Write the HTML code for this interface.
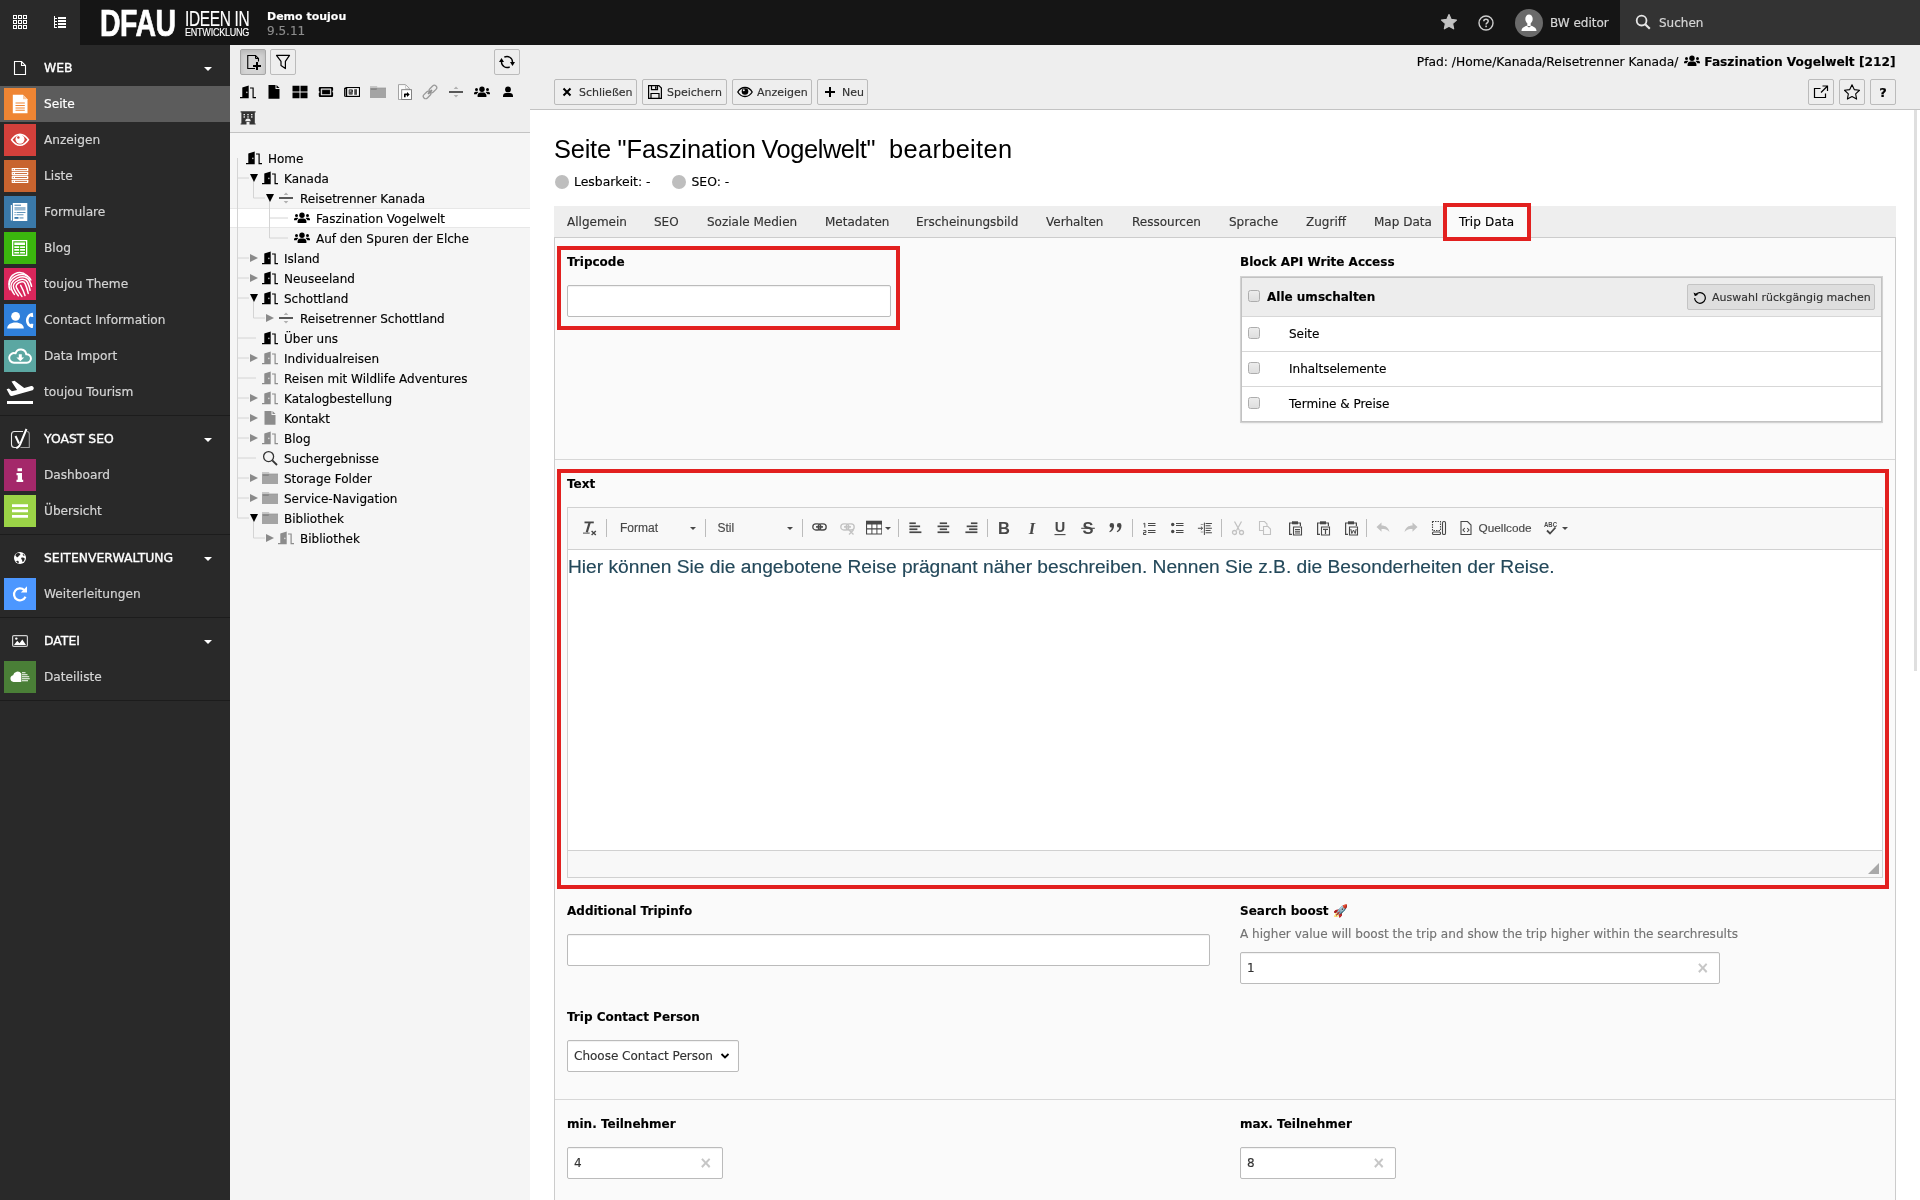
<!DOCTYPE html>
<html lang="de">
<head>
<meta charset="utf-8">
<title>Seite "Faszination Vogelwelt" bearbeiten</title>
<style>
*{box-sizing:border-box;margin:0;padding:0}
html,body{width:1920px;height:1200px;overflow:hidden;background:#fff}
body{font-family:"DejaVu Sans","Liberation Sans",sans-serif;font-size:12px;color:#000;position:relative}
svg{display:block}
.abs{position:absolute}
/* ---------- topbar ---------- */
#topbar{position:absolute;left:0;top:0;width:1920px;height:45px;background:#151515;color:#fff}
#topbar .left{position:absolute;left:0;top:0;width:80px;height:45px;background:#292929}
#topbar .search{position:absolute;left:1620px;top:0;width:300px;height:45px;background:#333}
.logo{position:absolute;left:100px;top:0;height:45px;color:#fff;font-family:"Liberation Sans",sans-serif;white-space:nowrap}
.logo span{position:absolute;transform-origin:0 0;line-height:1;display:block}
.sitename{position:absolute;left:267px;top:10px;font-size:11px;font-weight:bold;color:#fff;line-height:14px;white-space:nowrap}
.sitever{position:absolute;left:267px;top:24px;font-size:12px;color:#8c8c8c;line-height:14px;white-space:nowrap}
.tb-text{-webkit-text-stroke:.2px;position:absolute;top:1px;height:45px;line-height:45px;font-size:12px;color:#d6d6d6;white-space:nowrap}
/* ---------- module menu ---------- */
#modmenu{position:absolute;left:0;top:45px;width:230px;height:1155px;background:#292929;color:#fff}
.grp{padding:5px 0;border-bottom:1px solid #1c1c1c}
.grp .hd{-webkit-text-stroke:.35px #fff;height:36px;position:relative;line-height:36px;font-size:12.4px;color:#fff;padding-left:44px;white-space:nowrap}
.grp .hd .ic{position:absolute;left:12px;top:10px;width:16px;height:16px}
.grp .hd .car{position:absolute;left:204px;top:17px;width:0;height:0;border-left:4px solid transparent;border-right:4px solid transparent;border-top:4px solid #fff}
.mi{-webkit-text-stroke:.2px;height:36px;position:relative;line-height:36px;font-size:12.15px;color:#d4d4d4;padding-left:44px;white-space:nowrap}
.mi.act{background:#5c5c5c;color:#fff}
.mi .ib{position:absolute;left:4px;top:2px;width:32px;height:32px}
.mi .ib svg{position:absolute}
/* ---------- page tree ---------- */
#tree{position:absolute;left:230px;top:45px;width:300px;height:1155px;background:#f5f5f5}
#treebar{position:absolute;left:0;top:0;width:300px;height:88px;background:#eee;border-bottom:1px solid #c3c3c3}
.btn{position:absolute;height:26px;border:1px solid #bbb;border-radius:2px;background:#eee;font-size:11px;color:#333;line-height:26px;white-space:nowrap}
.btn.on{background:#d4d4d4;border-color:#a6a6a6;box-shadow:inset 0 3px 5px rgba(0,0,0,.125)}
.btn svg{position:absolute;left:4px;top:4px;width:16px;height:16px}
.tbi{position:absolute;width:16px;height:16px}
.tn{position:absolute;left:0;width:300px;height:20px;line-height:20px;font-size:12px;color:#000;white-space:nowrap}
.tn.sel{background:#fff;border-top:1px solid #e7e7e7;border-bottom:1px solid #e7e7e7;line-height:18px}
.tn .lb{position:absolute;top:1px}
.tn svg.i{position:absolute;top:2px;width:16px;height:16px}
.tn.sel svg.i{top:1px}
.tg{position:absolute;top:6px;width:0;height:0}
.tg.o{border-left:4.5px solid transparent;border-right:4.5px solid transparent;border-top:8px solid #000;margin-left:-4.5px}
.tg.c{border-top:4.5px solid transparent;border-bottom:4.5px solid transparent;border-left:8px solid #8a8a8a;margin-left:-4px;top:5.5px}
/* ---------- content ---------- */
#content{position:absolute;left:530px;top:45px;width:1390px;height:1155px;background:#fff}
#dochead{position:absolute;left:0;top:0;width:1390px;height:65px;background:#eee;border-bottom:1px solid #c3c3c3}
.path{position:absolute;right:24.5px;top:8px;height:18px;line-height:18px;font-size:12.27px;white-space:nowrap}
h1{-webkit-text-stroke:0;position:absolute;left:24px;top:86px;font-family:"Liberation Sans",sans-serif;font-weight:normal;font-size:25.4px;line-height:36px;white-space:nowrap;color:#000}
.yo{position:absolute;top:130px;height:14px;line-height:14px;font-size:12.4px;white-space:nowrap}
.yo i{position:absolute;left:-20px;top:0;width:14px;height:14px;border-radius:50%;background:#bebebe}
#tabs{position:absolute;left:24px;top:161px;width:1342px;height:32px;background:#eee;border-bottom:1px solid #ccc}
#tabs span{position:absolute;top:0;height:31px;line-height:33px;font-size:12px;color:#333;white-space:nowrap}
#panel{position:absolute;left:24px;top:192px;width:1342px;height:1000px;background:#fafafa;border:1px solid #ccc;border-bottom:0}
.red{position:absolute;border:4px solid #e2201f}
.lbl{position:absolute;font-weight:bold;font-size:12px;line-height:16px;white-space:nowrap;color:#000}
.inp{position:absolute;height:32px;background:#fff;border:1px solid #bbb;border-radius:2px;font-size:12px;line-height:30px;padding-left:6px;color:#333;box-shadow:inset 0 1px 1px rgba(0,0,0,.06)}
.inp .x{position:absolute;right:10px;top:1px;color:#c6c6c6;font-size:15px;line-height:29px;font-weight:bold}
.hr{position:absolute;left:0;width:1340px;height:1px;background:#d7d7d7}
/* checkbox box */
#cbx{position:absolute;left:686px;top:39px;width:641px;height:145px;border:1px solid #c2c2c2;background:#fff;box-shadow:0 0 0 1px #d2d2d2,0 1px 2px rgba(0,0,0,.12)}
#cbx .row{position:absolute;left:0;width:639px;height:35px;border-top:1px solid #d7d7d7;line-height:34px;font-size:12px;padding-left:47px;color:#000}
#cbx .h{position:absolute;left:0;top:0;width:639px;height:38px;background:#ededed;line-height:38px;font-weight:bold;padding-left:25px}
.cb{position:absolute;left:6px;width:12px;height:12px;border:1px solid #adadad;border-radius:2.5px;background:linear-gradient(#ececec,#dedede)}
/* cke */
#cke{position:absolute;left:12px;top:269px;width:1316px;height:371px;border:1px solid #d1d1d1;background:#fff}
#cke .top{position:absolute;left:0;top:0;width:1314px;height:42px;background:#f8f8f8;border-bottom:1px solid #d1d1d1}
#cke .bot{position:absolute;left:0;bottom:0;width:1314px;height:27px;background:#f8f8f8;border-top:1px solid #d1d1d1}
#cke .txt{position:absolute;left:0px;top:46px;font-family:"Liberation Sans",sans-serif;font-size:19.2px;line-height:26px;color:#23485a;white-space:nowrap}
.ck{position:absolute;top:12px;width:16px;height:16px}
.ck.dis{opacity:.3}
.cks{position:absolute;top:11px;width:1px;height:18px;background:#bcbcbc}
.ckt{position:absolute;top:10px;height:20px;line-height:20px;font-family:"Liberation Sans",sans-serif;font-size:12px;color:#484848;white-space:nowrap}
.ckar{position:absolute;top:19px;width:0;height:0;border-left:3px solid transparent;border-right:3px solid transparent;border-top:3px solid #484848}
#topbar,#modmenu,#tree,#content{-webkit-text-stroke:.15px;will-change:transform}
</style>
</head>
<body>
<div id="topbar"><div class="left">
<svg class="abs" style="left:13px;top:15px" width="14" height="14" viewBox="0 0 14 14" fill="none" stroke="#fff" stroke-width="1"><rect x="0.5" y="0.5" width="3" height="3"/><rect x="5.5" y="0.5" width="3" height="3"/><rect x="10.5" y="0.5" width="3" height="3"/><rect x="0.5" y="5.5" width="3" height="3"/><rect x="5.5" y="5.5" width="3" height="3"/><rect x="10.5" y="5.5" width="3" height="3"/><rect x="0.5" y="10.5" width="3" height="3"/><rect x="5.5" y="10.5" width="3" height="3"/><rect x="10.5" y="10.5" width="3" height="3"/></svg>
<svg class="abs" style="left:53px;top:15px" width="14" height="14" viewBox="0 0 14 14" fill="#fff"><path d="M5 2h8v2H5zM5 5h8v2H5zM5 8h8v2H5zM5 11h8v2H5z"/><path d="M1 1h1v12H1zM2 3h2v1H2zM2 6h2v1H2zM2 9h2v1H2zM2 12h2v1H2z"/></svg>
</div>
<div class="logo"><span style="left:0;top:6px;font-size:36px;font-weight:bold;transform:scaleX(.79);letter-spacing:-.6px;-webkit-text-stroke:.7px #fff">DFAU</span><span style="left:85px;top:8.5px;font-size:21.5px;transform:scaleX(.72);letter-spacing:-.5px">IDEEN IN</span><span style="left:85px;top:27px;font-size:11.5px;transform:scaleX(.785);letter-spacing:-.3px">ENTWICKLUNG</span></div>
<div class="sitename">Demo toujou</div><div class="sitever">9.5.11</div>
<svg class="abs" style="left:1440px;top:13px" width="18" height="18" viewBox="0 0 18 18"><path fill="#c2c2c2" stroke="#c2c2c2" stroke-width="1.200" stroke-linejoin="round" d="M9 1.500l2.200 4.900 5.300.6-3.900 3.600 1.050 5.200L9 13.200l-4.650 2.600L5.400 10.600 1.500 7l5.300-.6z"/></svg>
<svg class="abs" style="left:1478px;top:15px" width="16" height="16" viewBox="0 0 16 16"><circle cx="8" cy="8" r="7" fill="none" stroke="#cdcdcd" stroke-width="1.4"/><path fill="none" stroke="#cdcdcd" stroke-width="1.5" d="M5.8 6.3c0-1.3 1-2.1 2.2-2.1s2.2.8 2.2 2c0 1.6-2.1 1.6-2.1 3.3"/><rect x="7.3" y="10.6" width="1.6" height="1.6" fill="#cdcdcd"/></svg>
<svg class="abs" style="left:1515px;top:9px" width="28" height="28" viewBox="0 0 28 28"><defs><clipPath id="avc"><circle cx="14" cy="14" r="14"/></clipPath></defs><circle cx="14" cy="14" r="14" fill="#6a6a6a"/><g clip-path="url(#avc)" fill="#fff"><ellipse cx="14" cy="10" rx="3.700" ry="4.600"/><rect x="12.300" y="13" width="3.400" height="4"/><path d="M6.5 22c0-3.2 3-4.4 5.2-5.2l2.3 1.6 2.3-1.6c2.2.8 5.2 2 5.2 5.2z"/></g></svg>
<div class="tb-text" style="left:1550px">BW editor</div>
<div class="search"></div>
<svg class="abs" style="left:1635px;top:14px" width="16" height="16" viewBox="0 0 16 16" fill="none" stroke="#e6e6e6" stroke-width="1.8"><circle cx="6.6" cy="6.6" r="4.9"/><path d="M10.2 10.2l4.6 4.6" stroke-width="2.2"/></svg>
<div class="tb-text" style="left:1659px">Suchen</div>
</div>
<div id="modmenu">
<div class="grp"><div class="hd"><svg class="ic" viewBox="0 0 16 16" fill="none" stroke="#fff" stroke-width="1.100"><path d="M2.500 1.500h7l4 4v9h-11z"/><path d="M9.500 1.500v4h4"/></svg>WEB<span class="car"></span></div>
<div class="mi act"><span class="ib" style="background:#ef8533"><svg viewBox="0 0 32 32" style="left:0;top:0;width:32px;height:32px" ><path fill="#fff" d="M8.800 6.800h10.200l4.500 4.500v14H8.800z"/><path fill="#f9c9a3" d="M19 6.800l4.500 4.500H19z"/><path fill="#ef8533" d="M11.500 14.600h9.300v1h-9.300zM11.500 17h9.300v1h-9.300zM11.500 19.400h9.300v1h-9.300zM11.500 21.800h9.300v1h-9.300z"/></svg></span>Seite</div>
<div class="mi"><span class="ib" style="background:#d3403b"><svg viewBox="0 0 32 32" style="left:0;top:0;width:32px;height:32px" ><path fill="#fff" d="M6.600 15.800C9.500 11.500 12.500 9.500 16 9.500S22.500 11.500 25.400 15.800C22.500 20 19.500 22.100 16 22.100S9.500 20 6.600 15.800z"/><path fill="#d3403b" d="M8.600 15.800C11 12.500 13.300 11 16 11s5 1.500 7.400 4.800C21 19 18.700 20.600 16 20.600S11 19 8.600 15.800z"/><circle cx="16" cy="15.300" r="4.500" fill="#fff"/><circle cx="14.400" cy="13.500" r="1.200" fill="#d3403b"/></svg></span>Anzeigen</div>
<div class="mi"><span class="ib" style="background:#c8642f"><svg viewBox="0 0 32 32" style="left:0;top:0;width:32px;height:32px" ><g fill="#fff"><rect x="7.700" y="8.0" width="16.600" height="3.300" rx=".6"/><rect x="7.700" y="11.9" width="16.600" height="3.300" rx=".6"/><rect x="7.700" y="15.8" width="16.600" height="3.300" rx=".6"/><rect x="7.700" y="19.7" width="16.600" height="3.300" rx=".6"/></g><g fill="#c8642f"><rect x="11" y="9.2" width="12" height=".9"/><rect x="8.800" y="9.2" width="1" height=".9"/><rect x="11" y="13.1" width="12" height=".9"/><rect x="8.800" y="13.1" width="1" height=".9"/><rect x="11" y="17.0" width="12" height=".9"/><rect x="8.800" y="17.0" width="1" height=".9"/><rect x="11" y="20.9" width="12" height=".9"/><rect x="8.800" y="20.9" width="1" height=".9"/></g></svg></span>Liste</div>
<div class="mi"><span class="ib" style="background:#3a79a9"><svg viewBox="0 0 32 32" style="left:0;top:0;width:32px;height:32px" ><path fill="#fff" d="M6.800 9h1.200v15.500H6.800z" opacity=".95"/><path fill="#fff" d="M8.800 7h14.500v18H8.800z"/><path fill="#3a79a9" d="M10.500 8.700h6.500v1h-6.500z"/><path fill="#3a79a9" opacity=".5" d="M10.500 11h11v3.500h-11z"/><path fill="#3a79a9" opacity=".8" d="M10.500 16h1.200v1h-1.200zM12.500 16h9v1h-9zM10.500 18.300h1.200v1h-1.200zM12.500 18.300h7v1h-7z"/><path fill="#3a79a9" d="M10.500 21h4v1.800h-4z"/><path fill="#3a79a9" opacity=".5" d="M15.500 21h4v1.800h-4z"/></svg></span>Formulare</div>
<div class="mi"><span class="ib" style="background:#3bb60e"><svg viewBox="0 0 32 32" style="left:0;top:0;width:32px;height:32px" ><path fill="#fff" fill-rule="evenodd" d="M8 8h15.300v16H8zm1.300 1.300v13.400H22V9.300z"/><path fill="#fff" d="M10.300 10.500h10.700v2.500H10.300zM10.300 14.300h4.900v1.700h-4.900zM10.300 17.100h4.900v1.700h-4.900zM10.300 19.900h4.900v1.700h-4.900zM16.100 14.300H21v1.700h-4.900zM16.100 17.100H21v1.700h-4.900zM16.100 19.900H21v1.700h-4.900z"/></svg></span>Blog</div>
<div class="mi"><span class="ib" style="background:#d9265b"><svg viewBox="0 0 32 32" style="left:0;top:0;width:32px;height:32px" fill="none" stroke="#fff" stroke-width="1.500" stroke-linecap="round"><g transform="rotate(-25 16 16)"><path d="M6 11.500C8 7 11.500 4.500 16 4.500s8 2.500 10 7"/><path d="M4.500 17c0-6 5-10 11.500-10s11.500 4 11.500 10"/><path d="M6.500 23c-.5-2-.5-3.500-.5-5.500 0-5 4.500-8 10-8s10 3 10 8c0 2 0 3.500-.5 5.500"/><path d="M9.500 26c-.8-3-1-5-1-8.500 0-3.500 3.300-5.500 7.500-5.500s7.500 2 7.500 5.500c0 3.500-.2 5.500-1 8.500"/><path d="M12.500 28c-.8-3.500-1.300-6.500-1.300-10.200 0-2.200 2-3.500 4.800-3.500s4.800 1.300 4.800 3.500c0 3.700-.5 6.700-1.300 10.200"/><path d="M16 17.500c.3 4 .2 7.500-.3 11"/></g></svg></span>toujou Theme</div>
<div class="mi"><span class="ib" style="background:#2f80db"><svg viewBox="0 0 32 32" style="left:0;top:0;width:32px;height:32px" fill="#fff"><circle cx="11.600" cy="12.300" r="4.400"/><path d="M3.200 24.400c0-3.600 3.600-5.800 8.300-5.800s8.300 2.200 8.300 5.800z"/><path d="M28.800 8.700C24.800 9.200 22 12.400 22 16.400C22 20.400 24.800 23.600 28.800 24.100L29.300 19.900C28 19.600 26.900 19.700 26.200 20.200C25.200 19.200 24.600 17.900 24.600 16.400C24.600 14.900 25.200 13.600 26.200 12.600C26.900 13.100 28 13.200 29.300 12.900z"/></svg></span>Contact Information</div>
<div class="mi"><span class="ib" style="background:#5ba7a2"><svg viewBox="0 0 32 32" style="left:0;top:0;width:32px;height:32px" ><path d="M10 22.700H22.800A4.200 4.200 0 1 0 22.270 14.330A5.500 5.500 0 0 0 11.520 13.350A4.800 4.800 0 1 0 10 22.700z" fill="none" stroke="#fff" stroke-width="2" stroke-linejoin="round"/><path fill="#fff" d="M14.800 14.200h3v3.300h2.400l-3.900 3.800-3.900-3.800h2.400z"/></svg></span>Data Import</div>
<div class="mi"><span class="ib" style="background:transparent"><svg viewBox="0 0 32 32" style="left:0;top:0;width:32px;height:32px" fill="#fff"><path d="M3 25h26v3H3z"/><path d="M2.600 13.200l2.300-.6 3 2.700 5.200-1.400L7.500 5.600l3-.8 9.700 7.100 6.200-1.700c1.500-.4 3 .3 3.300 1.500.3 1.200-.6 2.500-2.100 2.900L8 19.900c-.8.200-1.600-.1-2.100-.7z"/></svg></span>toujou Tourism</div>
</div>
<div class="grp"><div class="hd"><svg class="ic" viewBox="0 0 20 22" fill="none" stroke="#fff" style="left:10px;top:7px;width:20px;height:22px"><path d="M13 3.500H4.500a3 3 0 0 0-3 3v10a3 3 0 0 0 3 3h2" stroke-width="1.100" opacity=".9"/><path d="M17 3.500c1.500 0 2.300 1 2.300 2.500v13.500h-8.800" stroke-width="1.100" opacity=".55"/><path d="M5.500 8l3.500 7.500" stroke-width="2"/><path d="M16.500 1L10 16.500c-.7 1.800-1.800 3.200-3.800 3.500" stroke-width="2"/></svg>YOAST SEO<span class="car"></span></div>
<div class="mi"><span class="ib" style="background:#a4286a"><svg viewBox="0 0 32 32" style="left:0;top:0;width:32px;height:32px" ><path fill="#fff" d="M13.500 9.200h4.500v3h-4.500zM12.500 14h5.500v6.800h1.200v2.200h-6.700v-2.200h1.200v-4.600h-1.200z"/></svg></span>Dashboard</div>
<div class="mi"><span class="ib" style="background:#9bd347"><svg viewBox="0 0 32 32" style="left:0;top:0;width:32px;height:32px" ><path fill="#fff" d="M8 9.200h16V12H8zM8 14.500h16v2.800H8zM8 19.900h16v2.800H8z"/></svg></span>Übersicht</div>
</div>
<div class="grp"><div class="hd"><svg class="ic" viewBox="0 0 16 16" style="left:12px;top:10px"><circle cx="8" cy="8" r="6" fill="#fff"/><path fill="#292929" d="M5.200 3.300c1-.4 2.500-.2 3 .5.500.8-.5 1.500-1.200 2-.8.500-.6 1.500-1.500 1.500s-1-.8-1.600-1.300c-.4-.4-.5-.9-.3-1.300.3-.6.900-1.100 1.600-1.400zM9.800 7.600c.9-.3 2.200 0 2.800.6.200 1.500-.6 3-1.800 3.900-.6-.4-.7-1.200-.6-1.900 0-.7-.9-.9-1-1.500-.1-.5.100-.9.600-1.100zM11 3.700c.8.500 1.400 1.300 1.700 2.100-.6.100-1.300-.1-1.700-.6-.3-.5-.3-1.100 0-1.500zM5.500 10.800c.6 0 1.200.5 1.300 1.100.1.500-.1 1-.5 1.300-.9-.3-1.700-.9-2.200-1.700.3-.4.800-.7 1.400-.7z"/></svg>SEITENVERWALTUNG<span class="car"></span></div>
<div class="mi"><span class="ib" style="background:#4c97ff"><svg viewBox="0 0 32 32" style="left:0;top:0;width:32px;height:32px" ><path d="M21.500 18.800a6 6 0 1 1-1.300-6.800" fill="none" stroke="#fff" stroke-width="2.200"/><path d="M23 8.300v6.200h-6.200z" fill="#fff"/></svg></span>Weiterleitungen</div>
</div>
<div class="grp"><div class="hd"><svg class="ic" viewBox="0 0 16 16"><rect x=".6" y="2.600" width="14.800" height="10.800" rx="1.200" fill="none" stroke="#cfcfcf" stroke-width="1.200"/><path fill="#fff" d="M2 12l3.200-4.200 2.300 2.400 2.800-3.700 3.700 5.500z"/><circle cx="4.300" cy="5.600" r="1.200" fill="#fff"/></svg>DATEI<span class="car"></span></div>
<div class="mi"><span class="ib" style="background:#4a7f37"><svg viewBox="0 0 32 32" style="left:0;top:0;width:32px;height:32px" fill="#fff"><path d="M9.500 21a3.400 3.400 0 0 1-.4-6.700 4.600 4.600 0 0 1 8.200-1.800V21z"/><path d="M18 11.300h3.500v1H18zM18 13.300h5.500v1H18zM18 15.300h7.200v1H18zM18 17.300h7.700v1H18zM18 19.300h6v1h-6z"/></svg></span>Dateiliste</div>
</div>
</div>
<div id="tree">
<div id="treebar">
<span class="btn on" style="left:10px;top:4px;width:26px"><svg viewBox="0 0 16 16" fill="none" stroke="#000" stroke-width="1.100"><path d="M13.500 7.500V4.500l-3-3H2.750v13H10"/><path d="M10.500 1.500v3h3" stroke-width="1"/><path d="M12 8v8M8 12h8" stroke-width="2"/></svg></span>
<span class="btn" style="left:40px;top:4px;width:26px"><svg viewBox="0 0 16 16" fill="none" stroke="#000" stroke-width="1.200" stroke-linejoin="round"><path d="M1.500 1.400h13L10.400 7.300v7.300L6 11.600V7.300z"/></svg></span>
<span class="btn" style="left:264px;top:4px;width:26px"><svg viewBox="0 0 16 16" fill="none" stroke="#000" stroke-width="1.400"><path d="M5.300 3.200A5.500 5.500 0 0 1 13.500 8M10.700 12.800A5.500 5.500 0 0 1 2.500 8"/><path fill="#000" stroke="none" d="M11 8h5l-2.500 4zM0 8h5L2.500 4z"/></svg></span>
<svg class="tbi" style="left:10px;top:39px" width="16" height="16" viewBox="0 0 16 16"><path fill="#000" d="M2.300 3.500L8.700 1.500V14.300H0V13H2.300z"/><path fill="#000" d="M10 3.400h3.700V13H16v1.300h-3.500V4.600H10z"/><rect x="6.300" y="7.700" width="1.100" height="1.400" fill="#eee"/></svg>
<svg class="tbi" style="left:36px;top:39px" width="16" height="16" viewBox="0 0 16 16"><path fill="#000" d="M2.500 1H9.500V5H13.500V14.800H2.500z"/><path fill="#000" d="M10.500 1L13.500 4H10.500z"/></svg>
<svg class="tbi" style="left:62px;top:39px" width="16" height="16" viewBox="0 0 16 16"><path fill="#000" d="M.5 1.700h7v5.800h-7zM8.500 1.700h7v5.800h-7zM.5 8.500h7v5.700h-7zM8.500 8.500h7v5.700h-7z"/></svg>
<svg class="tbi" style="left:88px;top:39px" width="16" height="16" viewBox="0 0 16 16"><path fill="#000" fill-rule="evenodd" d="M2 2.900h11.900a1.200 1.200 0 0 1 1.200 1.200v2.300a1 1 0 0 0-.7 1a1 1 0 0 0 .7 1v3.400a1.200 1.200 0 0 1-1.200 1.200H2a1.200 1.200 0 0 1-1.200-1.200V8.900a1 1 0 0 0 .7-1a1 1 0 0 0-.7-1V4.100a1.200 1.200 0 0 1 1.200-1.200zM3.300 4.400a.5.500 0 0 0-.5.500v5.900a.5.500 0 0 0 .5.500h9.400a.5.500 0 0 0 .5-.5V4.900a.5.500 0 0 0-.5-.5z"/><rect x="3.700" y="5.300" width="8.600" height="5.100" fill="#8a8a8a"/><rect x="4.200" y="6.100" width="7.700" height="4" fill="#000"/></svg>
<svg class="tbi" style="left:114px;top:39px" width="16" height="16" viewBox="0 0 16 16"><path fill="#000" d="M2.300 2.900H16v10.200H2.300L.1 12.500V4.100z"/><path fill="#fff" d="M3.200 4.100h11.700v7.700H3.200z"/><path fill="#9a9a9a" d="M1.100 5h.8v7h-.8z"/><rect x="4.600" y="5.200" width="4.200" height="5.600" rx=".8" fill="#555"/><circle cx="6.700" cy="7" r="1" fill="#9c9c9c"/><circle cx="8.200" cy="7" r=".7" fill="#000"/><rect x="10.200" y="5.200" width="2.800" height="5.600" fill="#4a4a4a"/></svg>
<svg class="tbi" style="left:140px;top:39px" width="16" height="16" viewBox="0 0 16 16"><path fill="#a4a4a4" d="M0 3.800h16V14H0z"/><path fill="#b9b9b9" d="M0 2.300h7l.8 1.500H0z"/><path fill="#878787" d="M.8 4.200h6.500l-.8 1.800H.8z"/><path fill="#9a9a9a" d="M7.800 3.800H16v.8H7.400z"/></svg>
<svg class="tbi" style="left:166px;top:39px" width="16" height="16" viewBox="0 0 16 16"><path fill="#fbfbfb" stroke="#9a9a9a" stroke-width=".9" d="M2.500.6h7l4 4v11H2.500z"/><path fill="none" stroke="#c4c4c4" stroke-width=".8" d="M9.500.6v4h4"/><rect x="5.700" y="5.700" width="9.800" height="9.800" fill="#fff" stroke="#777" stroke-width=".9"/><path fill="#000" d="M8 13.200V10.600c0-.6.400-1 1-1h2V8l2.700 2.500L11 13v-1.700H9.600v1.900z"/></svg>
<svg class="tbi" style="left:192px;top:39px" width="16" height="16" viewBox="0 0 16 16"><g transform="rotate(-45 8 8)" fill="none" stroke="#9a9a9a" stroke-width="1.300"><rect x="-.5" y="5.600" width="8.600" height="4.800" rx="2.400"/><rect x="7.900" y="5.600" width="8.600" height="4.800" rx="2.400"/></g><g transform="rotate(-45 8 8)"><rect x="5" y="7" width="6" height="2" rx="1" fill="#8f8f8f"/></g></svg>
<svg class="tbi" style="left:218px;top:39px" width="16" height="16" viewBox="0 0 16 16"><rect x="1" y="7" width="14" height="2" fill="#585858"/><path fill="#b0b0b0" d="M5.700 4.900h4.600L8 2.400zM5.700 11.100h4.600L8 13.600z"/></svg>
<svg class="tbi" style="left:244px;top:39px" width="16" height="16" viewBox="0 0 16 16"><circle cx="8" cy="5.200" r="2.700" fill="#000"/><path fill="#000" d="M3.600 13.100v-1.600c0-1.700 1.300-2.900 3-2.900h2.800c1.700 0 3 1.200 3 2.900v1.600z"/><circle cx="2.500" cy="5.600" r="1.500" fill="#000"/><circle cx="13.500" cy="5.600" r="1.500" fill="#000"/><path fill="#000" d="M0 10.300V9.500c0-1 .8-1.700 1.700-1.700h1.600c.4 0 .8.100 1.100.4-1 .6-1.600 1.300-1.800 2.100zM16 10.300V9.500c0-1-.8-1.700-1.700-1.700h-1.600c-.4 0-.8.100-1.100.4 1 .6 1.600 1.300 1.800 2.100z"/></svg>
<svg class="tbi" style="left:270px;top:39px" width="16" height="16" viewBox="0 0 16 16"><circle cx="8" cy="5.400" r="2.900" fill="#000"/><path fill="#000" d="M3 13.100v-1.300c0-1.700 1.300-2.900 3-2.900h4c1.700 0 3 1.200 3 2.900v1.300z"/></svg>
<svg class="tbi" style="left:10px;top:65px" width="16" height="16" viewBox="0 0 16 16"><path fill="#333" d="M.6 1.300h15v1.200h-.8v10.900h.8v1.200H9.500V12h-3v2.600H.6v-1.200h.8V2.500H.6z"/><g fill="#eee"><rect x="3.500" y="4" width="1.500" height="1.300"/><rect x="7.250" y="4" width="1.500" height="1.300"/><rect x="11" y="4" width="1.500" height="1.300"/><rect x="3.500" y="6.300" width="1.500" height="1.300"/><rect x="7.250" y="6.300" width="1.500" height="1.300"/><rect x="11" y="6.300" width="1.500" height="1.300"/><path d="M5.300 11.200a2.700 2.700 0 0 1 5.400 0z"/></g></svg>
</div>
<div class="tn sel" style="top:163px"></div>
<svg class="abs" style="left:0;top:0" width="300" height="600" fill="none" stroke="#d4d4d4" stroke-width="1"><path d="M7.5 133H19M23.5 153H35M39.5 173H58M39.5 193H58M7.5 213H19M7.5 233H19M7.5 253H19M23.5 273H35M7.5 293H26M7.5 313H19M7.5 333H26M7.5 353H19M7.5 373H19M7.5 393H19M7.5 413H26M7.5 433H19M7.5 453H19M7.5 473H19M23.5 493H35M7.5 113V473M23.5 133V153M39.5 153V193M23.5 253V273M23.5 473V493"/></svg>
<div class="tn" style="top:103px"><svg class="i" style="left:16px" viewBox="0 0 16 16"><path fill="#000" d="M2.300 3.500L8.700 1.500V14.300H0V13H2.300z"/><path fill="#000" d="M10 3.400h3.700V13H16v1.300h-3.500V4.600H10z"/><rect x="6.300" y="7.700" width="1.100" height="1.400" fill="#eee"/></svg><span class="lb" style="left:38px">Home</span></div>
<div class="tn" style="top:123px"><span class="tg o" style="left:24px"></span><svg class="i" style="left:32px" viewBox="0 0 16 16"><path fill="#000" d="M2.300 3.500L8.700 1.500V14.300H0V13H2.300z"/><path fill="#000" d="M10 3.400h3.700V13H16v1.300h-3.500V4.600H10z"/><rect x="6.300" y="7.700" width="1.100" height="1.400" fill="#eee"/></svg><span class="lb" style="left:54px">Kanada</span></div>
<div class="tn" style="top:143px"><span class="tg o" style="left:40px"></span><svg class="i" style="left:48px" viewBox="0 0 16 16"><rect x="1" y="7" width="14" height="2" fill="#585858"/><path fill="#b0b0b0" d="M5.700 4.900h4.600L8 2.400zM5.700 11.100h4.600L8 13.600z"/></svg><span class="lb" style="left:70px">Reisetrenner Kanada</span></div>
<div class="tn" style="top:163px"><svg class="i" style="left:64px" viewBox="0 0 16 16"><circle cx="8" cy="5.200" r="2.700" fill="#000"/><path fill="#000" d="M3.600 13.100v-1.600c0-1.700 1.300-2.900 3-2.900h2.800c1.700 0 3 1.200 3 2.900v1.600z"/><circle cx="2.500" cy="5.600" r="1.500" fill="#000"/><circle cx="13.500" cy="5.600" r="1.500" fill="#000"/><path fill="#000" d="M0 10.300V9.500c0-1 .8-1.700 1.700-1.700h1.600c.4 0 .8.100 1.100.4-1 .6-1.600 1.300-1.800 2.100zM16 10.300V9.500c0-1-.8-1.700-1.700-1.700h-1.600c-.4 0-.8.100-1.100.4 1 .6 1.600 1.300 1.800 2.100z"/></svg><span class="lb" style="left:86px">Faszination Vogelwelt</span></div>
<div class="tn" style="top:183px"><svg class="i" style="left:64px" viewBox="0 0 16 16"><circle cx="8" cy="5.200" r="2.700" fill="#000"/><path fill="#000" d="M3.600 13.100v-1.600c0-1.700 1.300-2.900 3-2.900h2.800c1.700 0 3 1.200 3 2.900v1.600z"/><circle cx="2.500" cy="5.600" r="1.500" fill="#000"/><circle cx="13.500" cy="5.600" r="1.500" fill="#000"/><path fill="#000" d="M0 10.300V9.500c0-1 .8-1.700 1.700-1.700h1.600c.4 0 .8.100 1.100.4-1 .6-1.600 1.300-1.800 2.100zM16 10.300V9.500c0-1-.8-1.700-1.700-1.700h-1.600c-.4 0-.8.100-1.100.4 1 .6 1.600 1.300 1.800 2.100z"/></svg><span class="lb" style="left:86px">Auf den Spuren der Elche</span></div>
<div class="tn" style="top:203px"><span class="tg c" style="left:24px"></span><svg class="i" style="left:32px" viewBox="0 0 16 16"><path fill="#000" d="M2.300 3.500L8.700 1.500V14.300H0V13H2.300z"/><path fill="#000" d="M10 3.400h3.700V13H16v1.300h-3.500V4.600H10z"/><rect x="6.300" y="7.700" width="1.100" height="1.400" fill="#eee"/></svg><span class="lb" style="left:54px">Island</span></div>
<div class="tn" style="top:223px"><span class="tg c" style="left:24px"></span><svg class="i" style="left:32px" viewBox="0 0 16 16"><path fill="#000" d="M2.300 3.500L8.700 1.500V14.300H0V13H2.300z"/><path fill="#000" d="M10 3.400h3.700V13H16v1.300h-3.500V4.600H10z"/><rect x="6.300" y="7.700" width="1.100" height="1.400" fill="#eee"/></svg><span class="lb" style="left:54px">Neuseeland</span></div>
<div class="tn" style="top:243px"><span class="tg o" style="left:24px"></span><svg class="i" style="left:32px" viewBox="0 0 16 16"><path fill="#000" d="M2.300 3.500L8.700 1.500V14.300H0V13H2.300z"/><path fill="#000" d="M10 3.400h3.700V13H16v1.300h-3.500V4.600H10z"/><rect x="6.300" y="7.700" width="1.100" height="1.400" fill="#eee"/></svg><span class="lb" style="left:54px">Schottland</span></div>
<div class="tn" style="top:263px"><span class="tg c" style="left:40px"></span><svg class="i" style="left:48px" viewBox="0 0 16 16"><rect x="1" y="7" width="14" height="2" fill="#585858"/><path fill="#b0b0b0" d="M5.700 4.900h4.600L8 2.400zM5.700 11.100h4.600L8 13.600z"/></svg><span class="lb" style="left:70px">Reisetrenner Schottland</span></div>
<div class="tn" style="top:283px"><svg class="i" style="left:32px" viewBox="0 0 16 16"><path fill="#000" d="M2.300 3.500L8.700 1.500V14.300H0V13H2.300z"/><path fill="#000" d="M10 3.400h3.700V13H16v1.300h-3.500V4.600H10z"/><rect x="6.300" y="7.700" width="1.100" height="1.400" fill="#eee"/></svg><span class="lb" style="left:54px">Über uns</span></div>
<div class="tn" style="top:303px"><span class="tg c" style="left:24px"></span><svg class="i" style="left:32px" viewBox="0 0 16 16"><path fill="#8c8c8c" d="M2.300 3.500L8.700 1.500V14.300H0V13H2.300z"/><path fill="#8c8c8c" d="M10 3.400h3.700V13H16v1.300h-3.500V4.600H10z"/><rect x="6.300" y="7.700" width="1.100" height="1.400" fill="#eee"/></svg><span class="lb" style="left:54px">Individualreisen</span></div>
<div class="tn" style="top:323px"><svg class="i" style="left:32px" viewBox="0 0 16 16"><path fill="#8c8c8c" d="M2.300 3.500L8.700 1.500V14.300H0V13H2.300z"/><path fill="#8c8c8c" d="M10 3.400h3.700V13H16v1.300h-3.500V4.600H10z"/><rect x="6.300" y="7.700" width="1.100" height="1.400" fill="#eee"/></svg><span class="lb" style="left:54px">Reisen mit Wildlife Adventures</span></div>
<div class="tn" style="top:343px"><span class="tg c" style="left:24px"></span><svg class="i" style="left:32px" viewBox="0 0 16 16"><path fill="#8c8c8c" d="M2.300 3.500L8.700 1.500V14.300H0V13H2.300z"/><path fill="#8c8c8c" d="M10 3.400h3.700V13H16v1.300h-3.500V4.600H10z"/><rect x="6.300" y="7.700" width="1.100" height="1.400" fill="#eee"/></svg><span class="lb" style="left:54px">Katalogbestellung</span></div>
<div class="tn" style="top:363px"><span class="tg c" style="left:24px"></span><svg class="i" style="left:32px" viewBox="0 0 16 16"><path fill="#8c8c8c" d="M2.500 1H9.500V5H13.500V14.800H2.500z"/><path fill="#8c8c8c" d="M10.500 1L13.500 4H10.500z"/></svg><span class="lb" style="left:54px">Kontakt</span></div>
<div class="tn" style="top:383px"><span class="tg c" style="left:24px"></span><svg class="i" style="left:32px" viewBox="0 0 16 16"><path fill="#8c8c8c" d="M2.300 3.500L8.700 1.500V14.300H0V13H2.300z"/><path fill="#8c8c8c" d="M10 3.400h3.700V13H16v1.300h-3.500V4.600H10z"/><rect x="6.300" y="7.700" width="1.100" height="1.400" fill="#eee"/></svg><span class="lb" style="left:54px">Blog</span></div>
<div class="tn" style="top:403px"><svg class="i" style="left:32px" viewBox="0 0 16 16"><circle cx="6.600" cy="6.600" r="5" fill="none" stroke="#333" stroke-width="1.300"/><path d="M10.300 10.300l4.700 4.700" stroke="#333" stroke-width="1.800"/></svg><span class="lb" style="left:54px">Suchergebnisse</span></div>
<div class="tn" style="top:423px"><span class="tg c" style="left:24px"></span><svg class="i" style="left:32px" viewBox="0 0 16 16"><path fill="#a4a4a4" d="M0 3.800h16V14H0z"/><path fill="#b9b9b9" d="M0 2.300h7l.8 1.500H0z"/><path fill="#878787" d="M.8 4.200h6.500l-.8 1.800H.8z"/><path fill="#9a9a9a" d="M7.800 3.800H16v.8H7.400z"/></svg><span class="lb" style="left:54px">Storage Folder</span></div>
<div class="tn" style="top:443px"><span class="tg c" style="left:24px"></span><svg class="i" style="left:32px" viewBox="0 0 16 16"><path fill="#a4a4a4" d="M0 3.800h16V14H0z"/><path fill="#b9b9b9" d="M0 2.300h7l.8 1.500H0z"/><path fill="#878787" d="M.8 4.200h6.500l-.8 1.800H.8z"/><path fill="#9a9a9a" d="M7.800 3.800H16v.8H7.400z"/></svg><span class="lb" style="left:54px">Service-Navigation</span></div>
<div class="tn" style="top:463px"><span class="tg o" style="left:24px"></span><svg class="i" style="left:32px" viewBox="0 0 16 16"><path fill="#a4a4a4" d="M0 3.800h16V14H0z"/><path fill="#b9b9b9" d="M0 2.300h7l.8 1.500H0z"/><path fill="#878787" d="M.8 4.200h6.500l-.8 1.800H.8z"/><path fill="#9a9a9a" d="M7.800 3.800H16v.8H7.400z"/></svg><span class="lb" style="left:54px">Bibliothek</span></div>
<div class="tn" style="top:483px"><span class="tg c" style="left:40px"></span><svg class="i" style="left:48px" viewBox="0 0 16 16"><path fill="#8c8c8c" d="M2.300 3.500L8.700 1.500V14.300H0V13H2.300z"/><path fill="#8c8c8c" d="M10 3.400h3.700V13H16v1.300h-3.500V4.600H10z"/><rect x="6.300" y="7.700" width="1.100" height="1.400" fill="#eee"/></svg><span class="lb" style="left:70px">Bibliothek</span></div>
</div>
<div id="content">
<div id="dochead">
<div class="path">Pfad: /Home/Kanada/Reisetrenner Kanada/ <svg style="display:inline-block;vertical-align:-3px;margin:0 0 0 2px" width="16" height="16" viewBox="0 0 16 16"><circle cx="8" cy="5.200" r="2.700" fill="#000"/><path fill="#000" d="M3.600 13.100v-1.600c0-1.700 1.300-2.900 3-2.900h2.800c1.700 0 3 1.200 3 2.900v1.600z"/><circle cx="2.500" cy="5.600" r="1.500" fill="#000"/><circle cx="13.500" cy="5.600" r="1.500" fill="#000"/><path fill="#000" d="M0 10.300V9.500c0-1 .8-1.700 1.700-1.700h1.600c.4 0 .8.100 1.100.4-1 .6-1.600 1.300-1.800 2.100zM16 10.300V9.500c0-1-.8-1.700-1.700-1.700h-1.600c-.4 0-.8.100-1.100.4 1 .6 1.600 1.300 1.800 2.100z"/></svg> <b style="font-size:12.200px">Faszination Vogelwelt [212]</b></div>
<span class="btn" style="left:24px;top:34px;width:83px;padding-left:24px"><svg viewBox="0 0 16 16" style="left:4px"><path d="M4.500 4.500l7 7M11.500 4.500l-7 7" stroke="#000" stroke-width="2"/></svg>Schließen</span>
<span class="btn" style="left:112px;top:34px;width:85px;padding-left:24px"><svg viewBox="0 0 16 16" style="left:4px" fill="none" stroke="#000" stroke-width="1.200"><path d="M1.600 1.600h10.300l2.500 2.500v10.300H1.600z"/><path d="M4.500 1.600v4h6v-4M4 14.400V9.500h8v4.900"/><rect x="8" y="2.300" width="1.500" height="2.500" fill="#000" stroke="none"/></svg>Speichern</span>
<span class="btn" style="left:202px;top:34px;width:80px;padding-left:24px"><svg viewBox="0 0 16 16" style="left:4px"><path fill="none" stroke="#000" stroke-width="1.300" d="M.8 8C2.500 5 5 3.500 8 3.500S13.500 5 15.200 8C13.500 11 11 12.500 8 12.500S2.500 11 .8 8z"/><circle cx="8" cy="7.500" r="3.300" fill="#000"/><circle cx="6.800" cy="6.300" r="1" fill="#eee"/></svg>Anzeigen</span>
<span class="btn" style="left:287px;top:34px;width:51px;padding-left:24px"><svg viewBox="0 0 16 16" style="left:4px"><path d="M8 3v10M3 8h10" stroke="#000" stroke-width="2"/></svg>Neu</span>
<span class="btn" style="left:1278px;top:34px;width:26px"><svg viewBox="0 0 16 16" fill="none" stroke="#000" stroke-width="1.200"><path d="M12.500 9.500v4h-11v-9h6"/><path d="M9.500 2h5v5M14.500 2L8 8.500"/></svg></span>
<span class="btn" style="left:1309px;top:34px;width:26px"><svg viewBox="0 0 16 16" fill="none" stroke="#000" stroke-width="1.100" stroke-linejoin="round"><path d="M8 .8l2.250 4.800 5.250.65-3.850 3.600.95 5.250L8 12.550l-4.600 2.550.95-5.250L.5 6.250l5.250-.65z"/></svg></span>
<span class="btn" style="left:1340px;top:34px;width:26px;text-align:center;font-weight:bold;font-size:13px;color:#000">?</span>
</div>
<h1><span style="letter-spacing:-.2px">Seite</span> <span style="position:absolute;left:63.5px;top:0;letter-spacing:-.05px">"Faszination</span> <span style="position:absolute;left:207.5px;top:0;letter-spacing:-.42px">Vogelwelt"</span> <span style="position:absolute;left:335px;top:0;letter-spacing:.34px">bearbeiten</span></h1>
<div class="yo" style="left:44px"><i style="left:-19px"></i>Lesbarkeit: -</div><div class="yo" style="left:161.5px"><i style="left:-19.5px"></i>SEO: -</div>
<div id="tabs"><span style="left:13px">Allgemein</span><span style="left:100px">SEO</span><span style="left:153px">Soziale Medien</span><span style="left:271px">Metadaten</span><span style="left:362px">Erscheinungsbild</span><span style="left:492px">Verhalten</span><span style="left:578px">Ressourcen</span><span style="left:675px">Sprache</span><span style="left:752px">Zugriff</span><span style="left:820px">Map Data</span></div>
<div id="panel">
<div class="red" style="left:2px;top:8px;width:343px;height:84px"></div>
<div class="lbl" style="left:12px;top:16px">Tripcode</div>
<div class="inp" style="left:12px;top:47px;width:324px"></div>
<div class="lbl" style="left:685px;top:16px">Block API Write Access</div>
<div id="cbx"><div class="h"><span class="cb" style="top:12px"></span>Alle umschalten<span class="btn" style="left:445px;top:6px;width:188px;height:26px;line-height:26px;background:#dedede;border-color:#c4c4c4;font-weight:normal;padding-left:24px"><svg viewBox="0 0 16 16" style="left:4px;top:4.500px" fill="none" stroke="#000" stroke-width="1.200"><path d="M3.300 5.500A5.300 5.300 0 1 1 2.700 8"/><path d="M1.500 2.500l1.300 3.500 3.500-1.300" fill="#000" stroke="none"/></svg>Auswahl rückgängig machen</span></div><div class="row" style="top:38px"><span class="cb" style="top:10px"></span>Seite</div><div class="row" style="top:73px"><span class="cb" style="top:10px"></span>Inhaltselemente</div><div class="row" style="top:108px"><span class="cb" style="top:10px"></span>Termine &amp; Preise</div></div>
<div class="hr" style="top:221px"></div>
<div class="red" style="left:2px;top:231px;width:1332px;height:420px;border-width:4px"></div>
<div class="lbl" style="left:12px;top:238px">Text</div>
<div id="cke"><div class="top">
<svg class="ck" style="left:14px" viewBox="0 0 16 16"><path fill="none" stroke="#484848" stroke-width="1.800" d="M2.500 2.400h9.300"/><path fill="none" stroke="#484848" stroke-width="2.200" d="M7.700 2.400L4.800 12.200"/><path stroke="#484848" stroke-width="1" d="M1 13.100h6.700"/><path stroke="#484848" stroke-width="1.400" d="M9.600 10.900l4.200 4.200M13.800 10.900l-4.200 4.200"/></svg>
<span class="cks" style="left:38px"></span>
<span class="ckt" style="left:52px">Format</span><span class="ckar" style="left:122px"></span>
<span class="cks" style="left:137px"></span>
<span class="ckt" style="left:149.5px">Stil</span><span class="ckar" style="left:219px"></span>
<span class="cks" style="left:233.5px"></span>
<svg class="ck" style="left:242.5px" viewBox="0 0 16 16"><g fill="none" stroke="#484848" stroke-width="1.300"><rect x="1.800" y="3.800" width="8" height="6.200" rx="3.100"/><rect x="7.200" y="3.800" width="8" height="6.200" rx="3.100"/></g><rect x="5" y="6.100" width="7" height="1.600" fill="#484848"/></svg>
<svg class="ck dis" style="left:270.5px" viewBox="0 0 16 16"><g fill="none" stroke="#484848" stroke-width="1.300"><rect x="1.800" y="3.800" width="8" height="6.200" rx="3.100"/><rect x="7.200" y="3.800" width="8" height="6.200" rx="3.100"/></g><rect x="5" y="6.100" width="7" height="1.600" fill="#484848"/><path stroke="#484848" stroke-width="1.300" d="M10 10l4.500 4.500M14.500 10L10 14.500"/></svg>
<svg class="ck" style="left:298px" viewBox="0 0 16 16"><path fill="#484848" d="M0 .7h16v13.800H0z"/><path fill="#fff" d="M1.100 4.500h4.300v3.700H1.100zM6.400 4.500h4v3.700h-4zM11.400 4.500h3.900v3.700h-3.900zM1.100 9.400h4.300v4H1.100zM6.400 9.400h4v4h-4zM11.400 9.400h3.900v4h-3.900z"/></svg>
<span class="ckar" style="left:317px"></span>
<span class="cks" style="left:329.5px"></span>
<svg class="ck" style="left:338.5px" viewBox="0 0 16 16"><rect x="2.40" y="2.40" width="6.40" height="1.700" fill="#484848"/><rect x="2.40" y="5.50" width="10.70" height="1.700" fill="#484848"/><rect x="2.40" y="8.40" width="8.00" height="1.700" fill="#484848"/><rect x="2.40" y="11.40" width="12.00" height="1.700" fill="#484848"/></svg>
<svg class="ck" style="left:367px" viewBox="0 0 16 16"><rect x="4.75" y="2.40" width="7.30" height="1.700" fill="#484848"/><rect x="2.55" y="5.50" width="11.70" height="1.700" fill="#484848"/><rect x="4.75" y="8.40" width="7.30" height="1.700" fill="#484848"/><rect x="2.55" y="11.40" width="11.70" height="1.700" fill="#484848"/></svg>
<svg class="ck" style="left:395px" viewBox="0 0 16 16"><rect x="7.90" y="2.40" width="6.50" height="1.700" fill="#484848"/><rect x="3.70" y="5.50" width="10.70" height="1.700" fill="#484848"/><rect x="6.10" y="8.40" width="8.30" height="1.700" fill="#484848"/><rect x="2.40" y="11.40" width="12.00" height="1.700" fill="#484848"/></svg>
<span class="cks" style="left:418.5px"></span>
<svg class="ck" style="left:428px" viewBox="0 0 16 16"><text x="8" y="13.8" text-anchor="middle" font-family="Liberation Sans, sans-serif" font-size="16.5" fill="#484848" font-weight="bold">B</text></svg>
<svg class="ck" style="left:456px" viewBox="0 0 16 16"><text x="8" y="13.8" text-anchor="middle" font-family="Liberation Serif, serif" font-size="16.5" fill="#484848" font-weight="bold" font-style="italic">I</text></svg>
<svg class="ck" style="left:484px" viewBox="0 0 16 16"><text x="8" y="12.3" text-anchor="middle" font-family="Liberation Sans, sans-serif" font-size="14.5" fill="#484848" font-weight="bold">U</text><path stroke="#484848" stroke-width="1.100" d="M2.500 14.600h11"/></svg>
<svg class="ck" style="left:511.5px" viewBox="0 0 16 16"><text x="8" y="13.8" text-anchor="middle" font-family="Liberation Sans, sans-serif" font-size="16.5" fill="#484848" font-weight="bold">S</text><path stroke="#484848" stroke-width="1.100" d="M1.200 8.300h13.600"/></svg>
<svg class="ck" style="left:539.5px" viewBox="0 0 16 16"><path fill="#484848" d="M1.5 5.400a2.300 2.300 0 1 1 4.600 0c0 3.300-1.600 5.600-4.300 6.900l-.5-.8c1.500-1 2.300-2.100 2.500-3.900a2.300 2.300 0 0 1-2.300-2.200zM8.9 5.400a2.300 2.300 0 1 1 4.600 0c0 3.300-1.600 5.600-4.300 6.900l-.5-.8c1.500-1 2.300-2.100 2.500-3.900a2.300 2.300 0 0 1-2.300-2.200z"/></svg>
<span class="cks" style="left:563.5px"></span>
<svg class="ck" style="left:573px" viewBox="0 0 16 16"><path fill="#484848" d="M7 3h7.500v1.100H7zM7 5h7.500v1.100H7zM7 10h7.500v1.100H7zM7 12h7.500v1.100H7z"/><path fill="none" stroke="#484848" stroke-width="1" d="M2.300 3.900l1.500-.7v4.400M2.300 10.600h2.600v2H2.500v1.900h2.700"/></svg>
<svg class="ck" style="left:601.3px" viewBox="0 0 16 16"><path fill="#484848" d="M7 3h7.500v1.100H7zM7 5h7.500v1.100H7zM7 10h7.500v1.100H7zM7 12h7.500v1.100H7z"/><circle cx="3.700" cy="4.500" r="1.700" fill="#484848"/><circle cx="3.700" cy="11.500" r="1.700" fill="#484848"/></svg>
<svg class="ck" style="left:629px" viewBox="0 0 16 16"><path fill="#484848" d="M8.600 3h6.300v1H8.600zM8.600 5.300h5v1h-5zM8.600 7.700h6.300v1H8.600zM8.600 10h5v1h-5zM8.600 12.300h6.300v1H8.600z"/><path stroke="#484848" stroke-width="1" fill="none" d="M7.400 2.600v12.400M.9 8.250h4.600M3.900 6.600l1.700 1.650-1.700 1.650"/><path fill="#484848" d="M3.800 4h1v1h-1zM5.300 4h1v1h-1zM3.800 11.500h1v1h-1zM5.300 11.500h1v1h-1z" opacity=".7"/></svg>
<span class="cks" style="left:652.5px"></span>
<svg class="ck dis" style="left:662.4px" viewBox="0 0 16 16"><g fill="none" stroke="#484848" stroke-width="1.300"><path d="M4.500 1.500l5 9M11.500 1.500l-5 9"/><circle cx="4.500" cy="12.500" r="2"/><circle cx="11.500" cy="12.500" r="2"/></g></svg>
<svg class="ck dis" style="left:689.4px" viewBox="0 0 16 16"><g fill="none" stroke="#484848" stroke-width="1.100"><path d="M2.500 1.500h5l2.500 2.500v6.500h-7.500z"/><path d="M6.500 6.500h4.500l2.500 2.500v5.500h-7z" fill="#f8f8f8"/></g></svg>
<svg class="ck" style="left:718.5px" viewBox="0 0 16 16"><path fill="none" stroke="#484848" stroke-width="1.200" d="M5 3H2.600v11.400H5M11 3h2.400v3"/><path fill="#484848" d="M5 1.300h6v3H5z"/><path fill="none" stroke="#484848" stroke-width="1.100" d="M6.500 7h8v8h-8z"/><path fill="#484848" d="M8 9h5v1H8zM8 10.700h5v1H8zM8 12.400h5v1H8z"/></svg>
<svg class="ck" style="left:746.7px" viewBox="0 0 16 16"><path fill="none" stroke="#484848" stroke-width="1.200" d="M5 3H2.600v11.400H5M11 3h2.400v3"/><path fill="#484848" d="M5 1.300h6v3H5z"/><path fill="none" stroke="#484848" stroke-width="1.100" d="M6.500 7h8v8h-8z"/><path fill="#484848" d="M8 8.700h5v1.200h-1.900v4h-1.200v-4H8z"/></svg>
<svg class="ck" style="left:775px" viewBox="0 0 16 16"><path fill="none" stroke="#484848" stroke-width="1.200" d="M5 3H2.600v11.400H5M11 3h2.400v3"/><path fill="#484848" d="M5 1.300h6v3H5z"/><path fill="none" stroke="#484848" stroke-width="1.100" d="M6.500 7h8v8h-8z"/><path fill="none" stroke="#484848" stroke-width="1" d="M7.800 9l1 4.500 1.700-3.500 1.700 3.500 1-4.500"/></svg>
<span class="cks" style="left:797.5px"></span>
<svg class="ck dis" style="left:807.4px" viewBox="0 0 16 16"><path fill="#484848" d="M1.500 7l5-4.500V5.500c4 0 7 2 8 6.500-2-2.500-4.500-3-8-3v2.800z"/></svg>
<svg class="ck dis" style="left:834.5px" viewBox="0 0 16 16"><path fill="#484848" d="M14.500 7l-5-4.500V5.500c-4 0-7 2-8 6.500 2-2.500 4.500-3 8-3v2.800z"/></svg>
<svg class="ck" style="left:863px" viewBox="0 0 16 16"><g fill="none" stroke="#484848" stroke-width="1.100"><path d="M1.500 1.500h8v9h-8z" stroke-dasharray="1.500 1"/><rect x="1.500" y="12" width="8" height="2.500" rx="1"/><rect x="11.500" y="1.500" width="3" height="13" rx="1.300"/></g></svg>
<svg class="ck" style="left:890.4px" viewBox="0 0 16 16"><g fill="none" stroke="#484848" stroke-width="1.100"><path d="M3 1.500h6.500l3.500 3.500v9.500H3z"/><path d="M6.800 8L5 10l1.800 2M9.200 8l1.800 2-1.800 2"/></g></svg>
<span class="ckt" style="left:910.5px;font-size:11.800px">Quellcode</span>
<svg class="ck" style="left:975px" viewBox="0 0 16 16"><text x="7.500" y="7" text-anchor="middle" font-family="Liberation Sans, sans-serif" font-size="7.500" font-weight="bold" fill="#484848" textLength="13" lengthAdjust="spacingAndGlyphs">ABC</text><path fill="none" stroke="#484848" stroke-width="1.800" d="M4 10.500l3 3 5.500-6"/></svg>
<span class="ckar" style="left:994px"></span>
</div>
<div class="txt">Hier können Sie die angebotene Reise prägnant näher beschreiben. Nennen Sie z.B. die Besonderheiten der Reise.</div>
<div class="bot"><svg class="abs" style="right:3px;bottom:3px" width="11" height="11" viewBox="0 0 11 11"><path fill="#a9a9a9" d="M11 0v11H0z"/></svg></div>
</div>
<div class="lbl" style="left:12px;top:665px">Additional Tripinfo</div>
<div class="inp" style="left:12px;top:696px;width:643px"></div>
<div class="lbl" style="left:685px;top:665px">Search boost 🚀</div>
<div class="abs" style="left:685px;top:688px;color:#737373;font-size:12.080px;line-height:16px;white-space:nowrap">A higher value will boost the trip and show the trip higher within the searchresults</div>
<div class="inp" style="left:685px;top:714px;width:480px">1<span class="x">×</span></div>
<div class="lbl" style="left:12px;top:771px">Trip Contact Person</div>
<div class="inp" style="left:12px;top:802px;width:172px">Choose Contact Person<svg class="abs" style="right:8px;top:11px" width="10" height="8" viewBox="0 0 10 8" fill="none" stroke="#000" stroke-width="1.800"><path d="M1.500 2l3.500 3.500L8.500 2"/></svg></div>
<div class="hr" style="top:861px"></div>
<div class="lbl" style="left:12px;top:878px">min. Teilnehmer</div>
<div class="inp" style="left:12px;top:909px;width:156px">4<span class="x">×</span></div>
<div class="lbl" style="left:685px;top:878px">max. Teilnehmer</div>
<div class="inp" style="left:685px;top:909px;width:156px">8<span class="x">×</span></div>
</div>
<div class="red" style="left:913px;top:158px;width:88px;height:38px;background:#fafafa"></div><div class="abs" style="left:929px;top:161px;line-height:33px;font-size:12px;letter-spacing:.15px;color:#000">Trip Data</div>
<div class="abs" style="left:1384px;top:65px;width:3px;height:561px;background:#dfdfdf"></div>
</div>
</body>
</html>
